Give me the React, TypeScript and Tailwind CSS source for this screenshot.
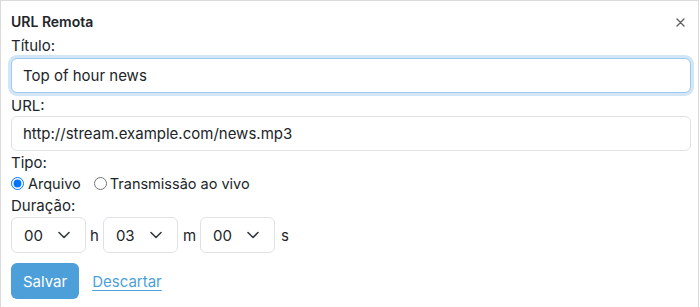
import React from 'react';

function Chevron() {
  return (
    <svg width="12" height="8" viewBox="0 0 12 8" fill="none" aria-hidden="true">
      <path d="M1 1.5l5 5 5-5" stroke="#343a40" strokeWidth="1.6" strokeLinecap="round" strokeLinejoin="round" />
    </svg>
  );
}

function TimeSelect({ value }: { value: string }) {
  return (
    <div className="flex h-[36px] w-[75px] items-center justify-between rounded-[6px] border border-[#dee2e6] bg-white pl-[12px] pr-[15px] text-[15px] text-[#212529]">
      <span>{value}</span>
      <Chevron />
    </div>
  );
}

export default function App() {
  return (
    <div
      className="h-[307px] w-[699px] border-l border-r border-t border-[#dadada] bg-white px-[10px] pt-[11px] text-[15px] leading-[21px] text-[#212529]"
      style={{ fontFamily: 'Inter, "Noto Sans", sans-serif' }}
    >
      {/* Header */}
      <div className="flex items-center justify-between">
        <h3 className="text-[14px] font-semibold leading-[20px] text-[#212529]">URL Remota</h3>
        <button type="button" className="mr-[2px] flex h-[20px] w-[12px] items-center justify-center" aria-label="Fechar">
          <svg width="9" height="9" viewBox="0 0 9 9" aria-hidden="true">
            <path d="M1 1l7 7M8 1l-7 7" stroke="#5f6368" strokeWidth="1.4" strokeLinecap="round" />
          </svg>
        </button>
      </div>

      <form>
        <label className="mt-[3px] block">Título:</label>
        <input
          type="text"
          defaultValue="Top of hour news"
          className="mt-[2px] block h-[35px] w-[680px] rounded-[6px] border border-[#9ccaee] bg-white px-[11px] text-[15px] text-[#212529] shadow-[0_0_0_3px_#d3e6f6] outline-none"
        />

        <label className="mt-[2px] block">URL:</label>
        <input
          type="text"
          defaultValue="http://stream.example.com/news.mp3"
          className="block h-[35px] w-[680px] rounded-[6px] border border-[#dee2e6] bg-white px-[11px] text-[15px] text-[#212529] outline-none"
        />

        <label className="mt-[1px] block">Tipo:</label>
        <div className="flex items-center text-[14.5px]">
          <label className="flex items-center">
            <input type="radio" name="tipo" defaultChecked className="m-0 h-[13px] w-[13px]" />
            <span className="ml-[4px]">Arquivo</span>
          </label>
          <label className="ml-[13px] flex items-center">
            <input type="radio" name="tipo" className="m-0 h-[13px] w-[13px]" />
            <span className="ml-[3px]">Transmissão ao vivo</span>
          </label>
        </div>

        <label className="mt-[1px] block">Duração:</label>
        <div className="mt-[1px] flex items-center">
          <TimeSelect value="00" />
          <span className="ml-[4px] mr-[4px]">h</span>
          <TimeSelect value="03" />
          <span className="ml-[5px] mr-[4px]">m</span>
          <TimeSelect value="00" />
          <span className="ml-[6px]">s</span>
        </div>

        <div className="mt-[10px] flex items-center gap-[13px]">
          <button
            type="button"
            className="h-[36px] rounded-[6px] bg-[#4c9fd9] px-[12px] text-[15px] text-white"
          >
            Salvar
          </button>
          <a href="#" className="text-[15px] text-[#4c9fd9] underline underline-offset-[3px]">
            Descartar
          </a>
        </div>
      </form>
    </div>
  );
}
